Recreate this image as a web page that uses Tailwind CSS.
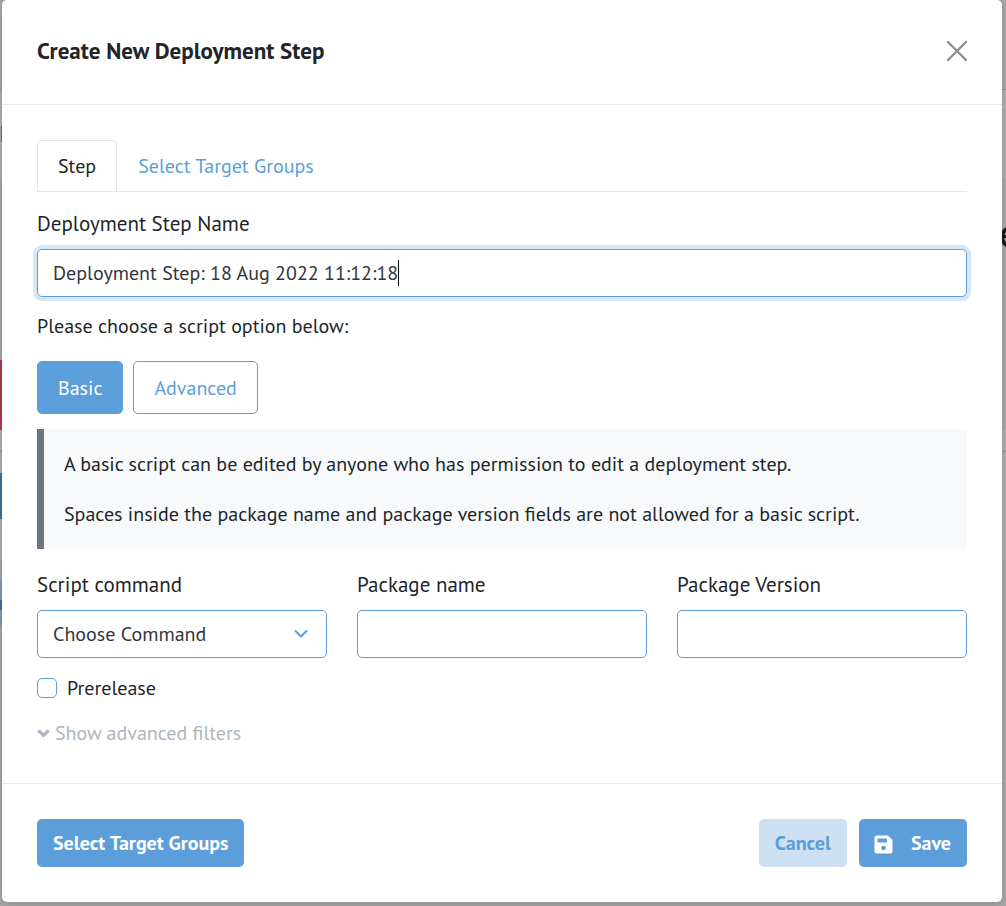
<!DOCTYPE html>
<html lang="en">
<head>
<meta charset="utf-8">
<meta name="viewport" content="width=device-width, initial-scale=1">
<title>Create New Deployment Step</title>
<script src="https://cdn.jsdelivr.net/npm/@tailwindcss/browser@4"></script>
</head>
<body class="relative min-h-screen overflow-x-hidden bg-[#a5a6a7] pr-1 pb-1 pl-0.5 font-['PT_Sans',Lato,sans-serif] text-[20px] leading-[30px] text-[#212529]">
<!-- Dimmed page behind the dialog -->
<div aria-hidden="true" class="absolute inset-0 overflow-hidden">
  <div class="absolute top-[89px] left-0 h-px w-full bg-[#929394]"></div>
  <div class="absolute top-[90px] left-0 h-22 w-full bg-[#adadad]"></div>
  <div class="absolute top-[126px] left-px h-4 w-px bg-[#66686a]"></div>
  <div class="absolute top-[360px] left-0 h-[70px] w-1 bg-[#ac3a50]"></div>
  <div class="absolute top-[430px] left-0 h-[130px] w-full bg-[#adadad]"></div>
  <div class="absolute top-[450px] left-0 h-0.5 w-full bg-[#9a9b9c]"></div>
  <div class="absolute top-[473px] left-0 h-[46px] w-1 bg-[#3f709c]"></div>
  <div class="absolute top-[580px] left-0 h-[47px] w-1 bg-[#8697ad]"></div>
  <div class="absolute top-[600px] left-0 h-[10px] w-1 bg-[#3f709c]"></div>
  <div class="absolute top-[226px] -right-4 size-[22px] rounded-full border-4 border-[#191a20]"></div>
  <div class="absolute top-[235px] right-0 h-[3px] w-1 bg-[#191a20]"></div>
</div>

<div role="dialog" aria-modal="true" aria-labelledby="dialog-title" class="relative rounded-[5px] bg-white shadow-[0_2px_8px_rgba(0,0,0,0.15)]">
  <header class="flex items-center justify-between border-b border-[#e9eaec] px-[35px] pt-[35px] pb-[37px]">
    <h1 id="dialog-title" class="text-[23px] leading-8 font-bold">Create New Deployment Step</h1>
    <button type="button" aria-label="Close" class="text-[#8b8d8f]">
      <svg class="size-5" viewBox="0 0 20 20" fill="none" stroke="currentColor" stroke-width="2.4" stroke-linecap="round"><path d="M1 1l18 18M19 1L1 19"/></svg>
    </button>
  </header>

  <form>
    <div class="p-[35px]">
      <div role="tablist" class="flex border-b border-[#e6e7e9]">
        <button type="button" role="tab" aria-selected="true" class="h-[51px] rounded-t-[5px] border border-b-0 border-[#e6e7e9] px-5">Step</button>
        <button type="button" role="tab" aria-selected="false" class="h-[51px] px-[21px] text-[#5c9ed9]">Select Target Groups</button>
      </div>

      <label for="step-name" class="mt-[17px] mb-2.5 block text-[21px]">Deployment Step Name</label>
      <div class="relative">
        <input id="step-name" type="text" value="Deployment Step: 18 Aug 2022 11:12:18" class="block h-12 w-full rounded-[5px] border border-[#5c9ed9] bg-white px-[15px] text-[#32363b] ring-4 ring-[#d5e7f5] outline-none">
        <span aria-hidden="true" class="absolute top-[11px] left-[361px] h-[26px] w-px bg-black"></span>
      </div>

      <p class="mt-3.5 mb-5">Please choose a script option below:</p>
      <div class="flex gap-2.5">
        <button type="button" class="h-[53px] rounded-[5px] border border-[#5c9ed9] bg-[#5c9ed9] px-5 text-white">Basic</button>
        <button type="button" class="h-[53px] rounded-[5px] border border-[#5c9ed9] px-5 text-[#5c9ed9]">Advanced</button>
      </div>

      <div class="mt-[15px] space-y-5 border-l-[7px] border-[#6c757d] bg-[#f7f9fb] p-5">
        <p>A basic script can be edited by anyone who has permission to edit a deployment step.</p>
        <p>Spaces inside the package name and package version fields are not allowed for a basic script.</p>
      </div>

      <div class="mt-[21px] grid grid-cols-3 gap-[30px]">
        <div>
          <label for="command" class="mb-2.5 block text-[21px]">Script command</label>
          <div class="relative">
            <select id="command" class="block h-12 w-full appearance-none rounded-[5px] border border-[#5c9ed9] bg-white px-[15px] text-[#32363b]"><option>Choose Command</option></select>
            <svg aria-hidden="true" class="pointer-events-none absolute top-[19px] right-[19px] h-[10px] w-[14px] text-[#5c9ed9]" viewBox="0 0 14 10" fill="none" stroke="currentColor" stroke-width="2" stroke-linecap="round" stroke-linejoin="round"><path d="M1.5 2L7 7.5 12.500 2"/></svg>
          </div>
        </div>
        <div>
          <label for="package-name" class="mb-2.5 block text-[21px]">Package name</label>
          <input id="package-name" type="text" class="block h-12 w-full rounded-[5px] border border-[#5c9ed9] px-[15px]">
        </div>
        <div>
          <label for="package-version" class="mb-2.5 block text-[21px]">Package Version</label>
          <input id="package-version" type="text" class="block h-12 w-full rounded-[5px] border border-[#5c9ed9] px-[15px]">
        </div>
      </div>

      <div class="mt-[15px] flex items-center gap-2.5">
        <input id="prerelease" type="checkbox" class="size-5 appearance-none rounded-[5px] border border-[#5c9ed9]">
        <label for="prerelease">Prerelease</label>
      </div>
      <button type="button" class="mt-[15px] flex items-center gap-[5px] text-[#adb5bd]">
        <svg aria-hidden="true" class="h-[9px] w-[13px]" viewBox="0 0 13 9" fill="none" stroke="currentColor" stroke-width="3.400"><path d="M1.300 1.500L6.500 6.300 11.700 1.500"/></svg>
        Show advanced filters
      </button>
    </div>

    <footer class="flex items-center justify-between border-t border-[#e9eaec] p-[35px] font-bold">
      <button type="button" class="h-12 rounded-[5px] bg-[#5c9ed9] px-4 text-white">Select Target Groups</button>
      <div class="flex gap-3">
        <button type="button" class="h-12 rounded-[5px] bg-[#cee1f2] px-4 text-[#5c9ed9]">Cancel</button>
        <button type="submit" class="flex h-12 items-center gap-[18px] rounded-[5px] bg-[#5c9ed9] pr-4 pl-[15px] text-white">
          <svg aria-hidden="true" class="mt-0.5 h-[19px] w-[19px]" viewBox="0 0 19 19" fill="currentColor" fill-rule="evenodd"><path d="M2.500 0.500H14L18.500 5V16.500Q18.500 18.500 16.500 18.500H2.500Q0.500 18.500 0.500 16.500V2.500Q0.500 0.500 2.500 0.500ZM3.500 3.500V7.500H13V3.500ZM9.500 10.700A2.300 2.300 0 1 0 9.500 15.300A2.300 2.300 0 1 0 9.500 10.700Z"/></svg>
          Save
        </button>
      </div>
    </footer>
  </form>
</div>
</body>
</html>
